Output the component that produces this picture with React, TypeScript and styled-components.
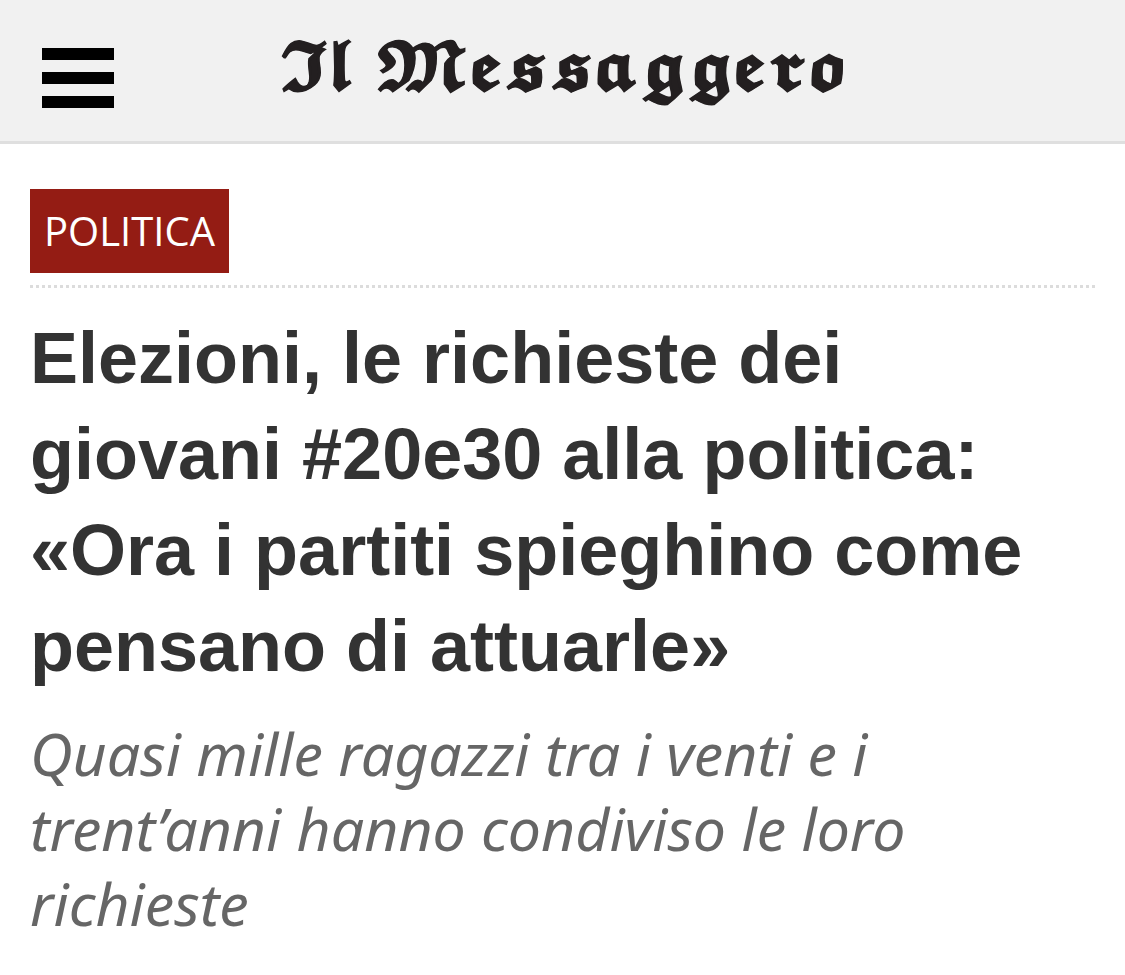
import styled, { createGlobalStyle } from "styled-components";

const GlobalStyle = createGlobalStyle`
  body {
    margin: 0;
    background: #ffffff;
  }
`;

const Header = styled.header`
  display: grid;
  grid-template-columns: 156px 1fr 156px;
  align-items: center;
  height: 141px;
  background: #f1f1f1;
  border-bottom: 3px solid #dfdfdf;
`;

const MenuButton = styled.button`
  justify-self: center;
  display: flex;
  flex-direction: column;
  gap: 12px;
  width: 72px;
  margin-top: 14px;
  padding: 0;
  border: 0;
  background: none;
`;

const MenuBar = styled.span`
  height: 12px;
  background: #000000;
`;

const Brand = styled.a`
  justify-self: center;
  color: #231f20;
  font: 700 62px/100px "DejaVu Math TeX Gyre", "Liberation Serif", serif;
  -webkit-text-stroke: 1px #231f20;
  white-space: nowrap;
  text-decoration: none;
`;

const Article = styled.article`
  padding: 45px 30px 24px;
`;

const CategoryBar = styled.div`
  display: flex;
  padding-bottom: 12px;
  border-bottom: 3px dotted #dcdcdc;
`;

const Category = styled.a`
  padding: 0 14px;
  background: #941c14;
  color: #ffffff;
  font: 40px/84px "Trebuchet MS", "Open Sans", sans-serif;
  text-decoration: none;
`;

const Title = styled.h1`
  margin: 22px 0 0;
  color: #333333;
  font: 700 72px/96px "Liberation Sans", Arial, sans-serif;
`;

const Summary = styled.h2`
  margin: 22px 0 0;
  color: #666666;
  font: italic 400 59px/75px "Trebuchet MS", "Noto Sans", sans-serif;
`;

export default function App() {
  return (
    <>
      <GlobalStyle />
      <Header>
        <MenuButton type="button" aria-label="Menu">
          <MenuBar />
          <MenuBar />
          <MenuBar />
        </MenuButton>
        <Brand href="#" aria-label="Il Messaggero">𝕴𝖑 𝕸𝖊𝖘𝖘𝖆𝖌𝖌𝖊𝖗𝖔</Brand>
      </Header>
      <Article>
        <CategoryBar>
          <Category href="#">POLITICA</Category>
        </CategoryBar>
        <Title>
          Elezioni, le richieste dei giovani #20e30 alla politica: «Ora i
          partiti spieghino come pensano di attuarle»
        </Title>
        <Summary>
          Quasi mille ragazzi tra i venti e i trent’anni hanno condiviso le
          loro richieste
        </Summary>
      </Article>
    </>
  );
}
